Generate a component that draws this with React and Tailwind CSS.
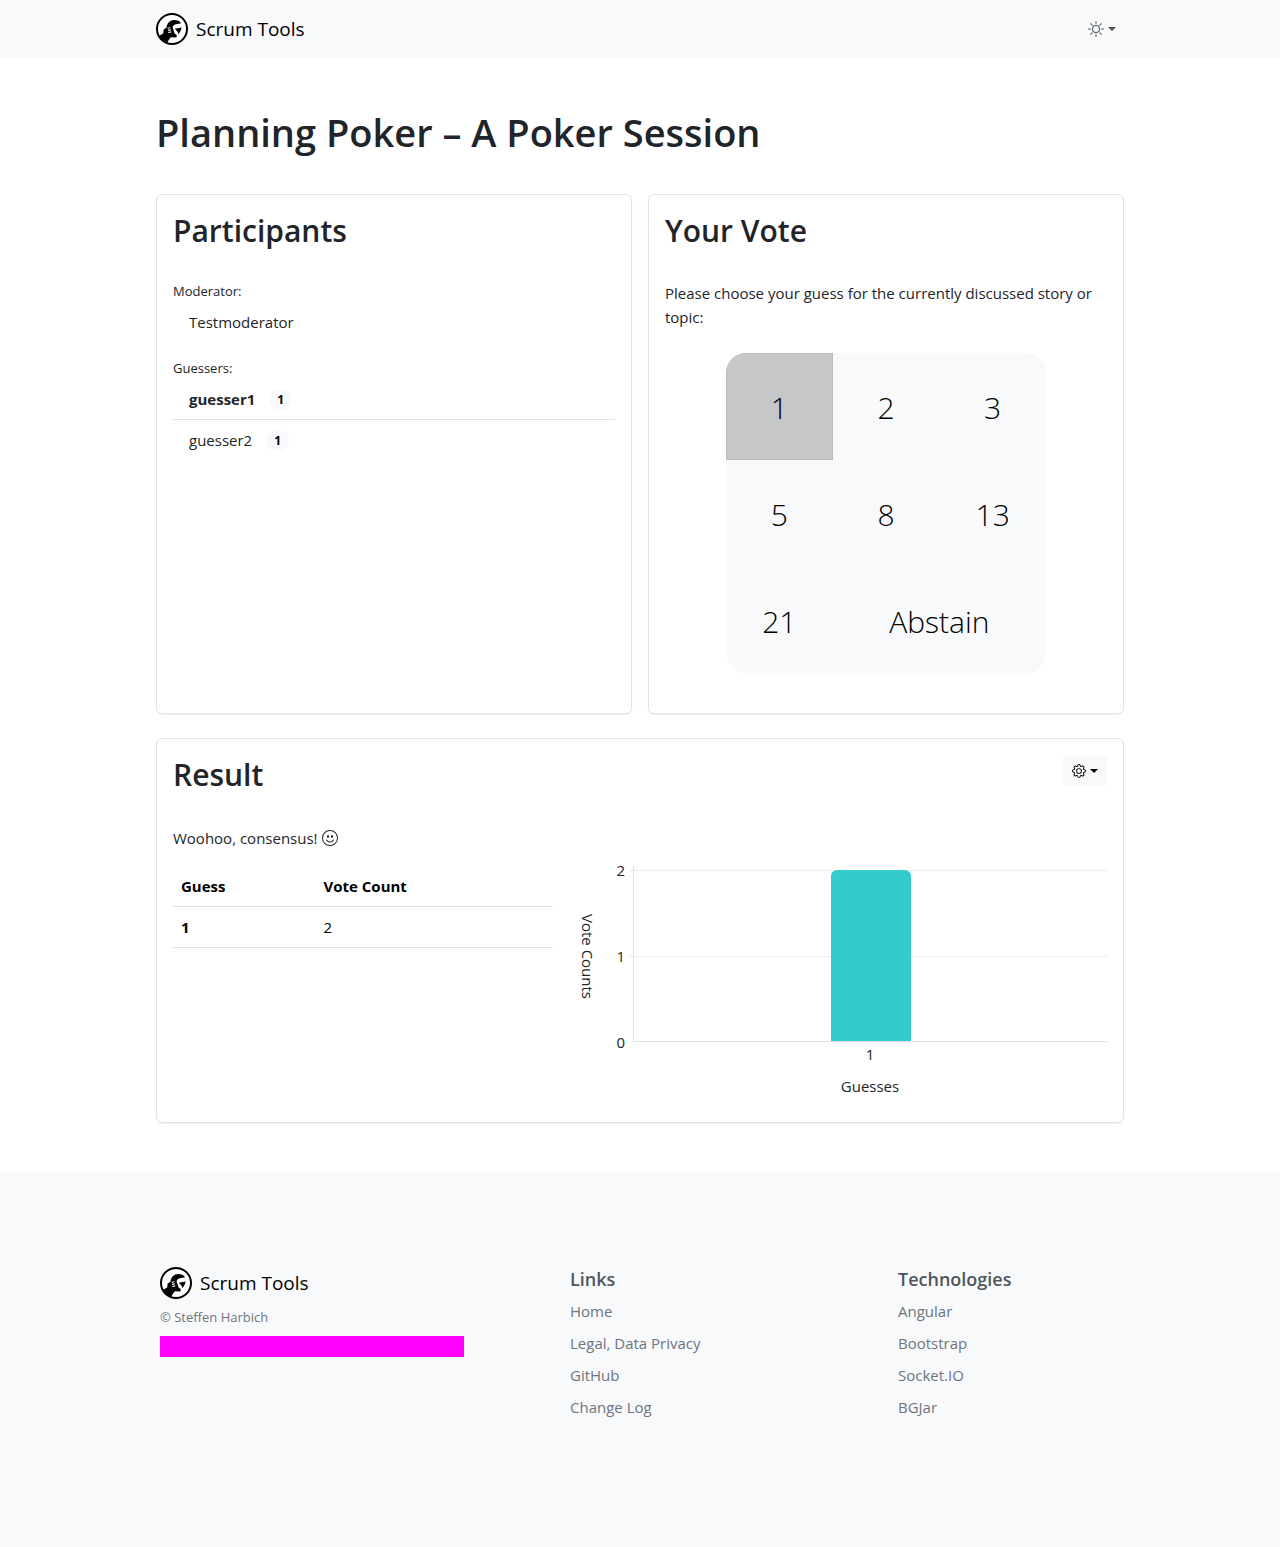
import React, { useState } from "react";
import { BsSun, BsGear, BsEmojiSmile } from "react-icons/bs";

const voteOptions = ["1", "2", "3", "5", "8", "13", "21"];

const guessers = [
  { name: "guesser1", vote: 1, self: true },
  { name: "guesser2", vote: 1, self: false },
];

const results = [{ guess: "1", count: 2 }];

const pageLinks = ["Home", "Legal, Data Privacy", "GitHub", "Change Log"];
const techLinks = ["Angular", "Bootstrap", "Socket.IO", "BGJar"];

function Logo() {
  return (
    <svg viewBox="0 0 32 32" className="size-8 shrink-0" aria-hidden="true">
      <circle cx="16" cy="16" r="15" fill="#fff" stroke="#000" strokeWidth="2" />
      <path
        d="M10.500 14.500C10.800 10.500 14 7 18.500 7C21.500 7 24 8.200 25.200 10.300L19.800 11.200C17.800 11.800 16.700 13 16.600 14.600L18.600 20.600L20.800 22L20.400 24.400L14.800 24.200C13.400 25.800 12.300 27.500 11.400 29.800C8 28.800 4.800 26.200 3.200 22.800L7.200 20.400L7.600 16.800Z"
        fill="#000"
      />
      <path d="M18.800 15.800L25.600 14.600C25.200 17 24.200 19.200 22.400 21.200L21.600 18.800Z" fill="#000" />
      <path
        d="M11.600 15.300L14.400 14.700M12 17.400L14.900 16.800M12.300 19.500L15.200 18.900"
        stroke="#fff"
        strokeWidth="1.100"
        fill="none"
      />
    </svg>
  );
}

function Brand() {
  return (
    <a href="#home" className="flex w-fit items-center gap-2 text-[19px] leading-8 text-black">
      <Logo />
      <span>Scrum Tools</span>
    </a>
  );
}

function Caret() {
  return <span className="border-x-4 border-t-4 border-x-transparent border-t-current" aria-hidden="true" />;
}

function Card({ children }) {
  return (
    <section className="rounded-md border border-[#e2e3e5] bg-white p-4 shadow-[0_1px_2px_rgba(0,0,0,0.06)]">
      {children}
    </section>
  );
}

function CardTitle({ children }) {
  return <h2 className="text-[30px] font-semibold leading-[39px]">{children}</h2>;
}

function Participants() {
  return (
    <Card>
      <CardTitle>Participants</CardTitle>
      <h3 className="mt-[31px] text-[13px] leading-[21px]">Moderator:</h3>
      <ul>
        <li className="px-4 py-2">Testmoderator</li>
      </ul>
      <h3 className="mt-4 text-[13px] leading-[21px]">Guessers:</h3>
      <ul className="divide-y divide-[#dee2e6]">
        {guessers.map((g) => (
          <li key={g.name} className="flex items-center gap-3.5 px-4 py-2">
            <span className={g.self ? "font-bold" : ""}>{g.name}</span>
            <span className="rounded-full bg-[#f8f9fb] px-2 text-[12px] font-bold leading-[21px] text-black">{g.vote}</span>
          </li>
        ))}
      </ul>
    </Card>
  );
}

function VoteCell({ label, selected, wide, onSelect }) {
  return (
    <button
      type="button"
      aria-pressed={selected}
      onClick={onSelect}
      className={
        "border pt-1 text-[30px] font-light text-black " +
        (wide ? "col-span-2 " : "") +
        (selected ? "border-[#babbbc] bg-[#c6c7c8]" : "border-transparent")
      }
    >
      {label}
    </button>
  );
}

function YourVote() {
  const [vote, setVote] = useState("1");
  return (
    <Card>
      <CardTitle>Your Vote</CardTitle>
      <p className="mb-6 mt-[31px]">Please choose your guess for the currently discussed story or topic:</p>
      <div className="mx-auto mb-6 grid aspect-square w-full max-w-80 grid-cols-3 grid-rows-3 overflow-hidden rounded-[20px] bg-[#f8f9fb]">
        {voteOptions.map((v) => (
          <VoteCell key={v} label={v} selected={vote === v} onSelect={() => setVote(v)} />
        ))}
        <VoteCell label="Abstain" wide selected={vote === "Abstain"} onSelect={() => setVote("Abstain")} />
      </div>
    </Card>
  );
}

function ResultTable() {
  return (
    <table className="w-full text-left text-black">
      <thead>
        <tr className="border-b border-[#dee2e6]">
          <th scope="col" className="w-3/8 p-2 font-bold">Guess</th>
          <th scope="col" className="p-2 font-bold">Vote Count</th>
        </tr>
      </thead>
      <tbody>
        {results.map((r) => (
          <tr key={r.guess} className="border-b border-[#dee2e6]">
            <th scope="row" className="p-2 font-bold">{r.guess}</th>
            <td className="p-2">{r.count}</td>
          </tr>
        ))}
      </tbody>
    </table>
  );
}

function ResultChart() {
  const max = 2;
  return (
    <figure className="grid h-60 grid-cols-[26px_24px_8px_1fr] grid-rows-[176px_24px_40px]">
      <div className="flex items-center justify-center pt-1 leading-6 [writing-mode:vertical-rl]">Vote Counts</div>
      <div className="-mb-3 -mt-2 flex flex-col justify-between text-right">
        <span>2</span>
        <span>1</span>
        <span>0</span>
      </div>
      <div className="flex flex-col justify-between pl-1 pt-1">
        <span className="h-px bg-[#eceeef]" />
        <span className="h-px bg-[#eceeef]" />
        <span className="h-px bg-[#eceeef]" />
      </div>
      <div className="grid border-b border-l border-[#dee2e6] pt-1">
        <div className="col-start-1 row-start-1 flex flex-col justify-between">
          <span className="h-px bg-[#eceeef]" />
          <span className="h-px bg-[#eceeef]" />
          <span />
        </div>
        <div className="col-start-1 row-start-1 flex items-end justify-around">
          {results.map((r) => (
            <div key={r.guess} className="w-20 rounded-t-md bg-[#33cccc]" style={{ height: `${(r.count / max) * 100}%` }} />
          ))}
        </div>
      </div>
      <div className="col-start-4 flex justify-around">
        {results.map((r) => (
          <span key={r.guess}>{r.guess}</span>
        ))}
      </div>
      <figcaption className="col-start-4 pt-2 text-center">Guesses</figcaption>
    </figure>
  );
}

function Result() {
  return (
    <Card>
      <div className="flex items-start justify-between">
        <CardTitle>Result</CardTitle>
        <button
          type="button"
          aria-label="Result settings"
          className="flex h-[31px] items-center gap-1 rounded bg-[#f8f9fb] px-[9px] text-black"
        >
          <BsGear className="size-3.5" />
          <Caret />
        </button>
      </div>
      <p className="mb-4 mt-8 flex items-center gap-1">
        Woohoo, consensus! <BsEmojiSmile className="size-4" />
      </p>
      <div className="grid grid-cols-[5fr_7fr] items-start gap-[22px]">
        <ResultTable />
        <ResultChart />
      </div>
    </Card>
  );
}

function LinkColumn({ title, links, className }) {
  return (
    <nav aria-label={title} className={className}>
      <h2 className="text-[18px] font-semibold leading-6 text-[#50565b]">{title}</h2>
      <ul className="mt-2 flex flex-col gap-2">
        {links.map((l) => (
          <li key={l}>
            <a href="#link" className="text-[#6c757d]">{l}</a>
          </li>
        ))}
      </ul>
    </nav>
  );
}

export default function App() {
  return (
    <div className="flex min-h-screen flex-col bg-white font-['Open_Sans','Noto_Sans',sans-serif] text-[15px] leading-6 text-[#212529]">
      <header className="bg-[#f8f9fb]">
        <div className="mx-auto flex h-[58px] max-w-[968px] items-center justify-between">
          <Brand />
          <button type="button" aria-label="Toggle theme" className="flex items-center gap-1 px-2 py-2 text-[#4d5154]">
            <BsSun className="size-4" />
            <Caret />
          </button>
        </div>
      </header>

      <main className="mx-auto w-full max-w-[968px] pb-12 pt-[50px]">
        <h1 className="text-[38px] font-semibold leading-[48px]">Planning Poker – A Poker Session</h1>
        <div className="mb-6 mt-[38px] grid grid-cols-2 gap-4">
          <Participants />
          <YourVote />
        </div>
        <Result />
      </main>

      <footer className="grow bg-[#f8f9fb] py-24">
        <div className="mx-auto grid max-w-[960px] grid-cols-12 gap-6">
          <div className="col-span-4">
            <Brand />
            <p className="mt-2 text-[13px] leading-[21px] text-[#6c757d]">© Steffen Harbich</p>
            <div className="mt-2 h-[21px] bg-[#ff00ff]" />
          </div>
          <LinkColumn title="Links" links={pageLinks} className="col-span-3 col-start-6" />
          <LinkColumn title="Technologies" links={techLinks} className="col-span-3 col-start-10" />
        </div>
      </footer>
    </div>
  );
}
